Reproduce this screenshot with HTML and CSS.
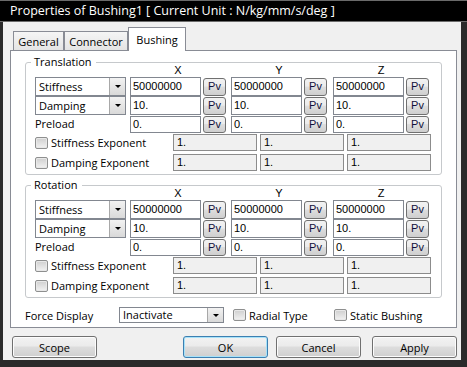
FILE: index.html
```html
<!DOCTYPE html>
<html lang="en">
  <head>
    <meta charset="UTF-8" />
    <title>Properties of Bushing1</title>
    <link rel="stylesheet" href="styles.css">
  </head>
  <body>
    <div class="window">
      <div class="titlebar">Properties of Bushing1 [ Current Unit : N/kg/mm/s/deg ]</div>

      <div class="client">
        <div class="tabs">
          <div class="tab general">General</div>
          <div class="tab connector">Connector</div>
          <div class="tab bushing active">Bushing</div>
        </div>

        <div class="panel">
          <div class="group">
            <span class="legend">Translation</span>
            <div class="row head">
              <div class="lab"></div>
              <div class="cell">X</div>
              <div class="cell">Y</div>
              <div class="cell z">Z</div>
            </div>
            <div class="row r1">
              <div class="lab combo"><span class="txt">Stiffness</span><span class="drop"><i class="arrow"></i></span></div>
              <div class="cell"><div class="field">50000000</div><div class="pv">Pv</div></div>
              <div class="cell"><div class="field">50000000</div><div class="pv">Pv</div></div>
              <div class="cell z"><div class="field">50000000</div><div class="pv">Pv</div></div>
            </div>
            <div class="row r2">
              <div class="lab combo"><span class="txt">Damping</span><span class="drop"><i class="arrow"></i></span></div>
              <div class="cell"><div class="field">10.</div><div class="pv">Pv</div></div>
              <div class="cell"><div class="field">10.</div><div class="pv">Pv</div></div>
              <div class="cell z"><div class="field">10.</div><div class="pv">Pv</div></div>
            </div>
            <div class="row r3">
              <div class="lab text">Preload</div>
              <div class="cell"><div class="field">0.</div><div class="pv">Pv</div></div>
              <div class="cell"><div class="field">0.</div><div class="pv">Pv</div></div>
              <div class="cell z"><div class="field">0.</div><div class="pv">Pv</div></div>
            </div>
            <div class="row exp e1">
              <label class="check-lab"><span class="check"></span>Stiffness Exponent</label>
              <div class="dis">1.</div>
              <div class="dis">1.</div>
              <div class="dis">1.</div>
            </div>
            <div class="row exp e2">
              <label class="check-lab"><span class="check"></span>Damping Exponent</label>
              <div class="dis">1.</div>
              <div class="dis">1.</div>
              <div class="dis">1.</div>
            </div>
          </div>

          <div class="group">
            <span class="legend">Rotation</span>
            <div class="row head">
              <div class="lab"></div>
              <div class="cell">X</div>
              <div class="cell">Y</div>
              <div class="cell z">Z</div>
            </div>
            <div class="row r1">
              <div class="lab combo"><span class="txt">Stiffness</span><span class="drop"><i class="arrow"></i></span></div>
              <div class="cell"><div class="field">50000000</div><div class="pv">Pv</div></div>
              <div class="cell"><div class="field">50000000</div><div class="pv">Pv</div></div>
              <div class="cell z"><div class="field">50000000</div><div class="pv">Pv</div></div>
            </div>
            <div class="row r2">
              <div class="lab combo"><span class="txt">Damping</span><span class="drop"><i class="arrow"></i></span></div>
              <div class="cell"><div class="field">10.</div><div class="pv">Pv</div></div>
              <div class="cell"><div class="field">10.</div><div class="pv">Pv</div></div>
              <div class="cell z"><div class="field">10.</div><div class="pv">Pv</div></div>
            </div>
            <div class="row r3">
              <div class="lab text">Preload</div>
              <div class="cell"><div class="field">0.</div><div class="pv">Pv</div></div>
              <div class="cell"><div class="field">0.</div><div class="pv">Pv</div></div>
              <div class="cell z"><div class="field">0.</div><div class="pv">Pv</div></div>
            </div>
            <div class="row exp e1">
              <label class="check-lab"><span class="check"></span>Stiffness Exponent</label>
              <div class="dis">1.</div>
              <div class="dis">1.</div>
              <div class="dis">1.</div>
            </div>
            <div class="row exp e2">
              <label class="check-lab"><span class="check"></span>Damping Exponent</label>
              <div class="dis">1.</div>
              <div class="dis">1.</div>
              <div class="dis">1.</div>
            </div>
          </div>

          <div class="force">
            <div class="force-lab">Force Display</div>
            <div class="combo force-combo"><span class="txt">Inactivate</span><span class="drop"><i class="arrow"></i></span></div>
            <label class="check-lab radial"><span class="check"></span>Radial Type</label>
            <label class="check-lab"><span class="check"></span>Static Bushing</label>
          </div>
        </div>

        <div class="buttons">
          <button class="btn">Scope</button>
          <button class="btn ok">OK</button>
          <button class="btn cancel">Cancel</button>
          <button class="btn apply">Apply</button>
        </div>
      </div>
    </div>
  </body>
</html>
```

FILE: styles.css
```css
* {
  box-sizing: border-box;
}

body {
  margin: 0;
  background: #1a1a1a;
  font-family: "Open Sans", "Noto Sans", sans-serif;
  font-size: 11px;
  color: #000;
}

.window {
  width: 467px;
  height: 367px;
  overflow: hidden;
}

.titlebar {
  height: 22px;
  padding-left: 10px;
  background: linear-gradient(#6a6a6a 0, #6a6a6a 1px, #000 1px, #000 21px, #6c6c6c 21px);
  color: #fff;
  font-size: 12.5px;
  line-height: 22px;
  white-space: nowrap;
}

.client {
  height: 345px;
  padding-top: 5px;
  background: #f0f0f0;
  border-left: 3px solid #2a2a2a;
  border-right: 6px solid #2a2a2a;
  border-bottom: 7px solid #2a2a2a;
}

/* tabs */
.tabs {
  position: relative;
  z-index: 1;
  display: flex;
  align-items: flex-end;
  height: 23px;
  padding-left: 10px;
}

.tab {
  height: 19px;
  padding-top: 1px;
  border: 1px solid #898c95;
  border-bottom: none;
  background: linear-gradient(#f5f5f5, #e4e4e4);
  text-align: center;
  line-height: 18px;
}

.tab.general {
  width: 51px;
}

.tab.connector {
  width: 64px;
}

.tab.bushing {
  width: 58px;
}

.tab.active {
  height: 24px;
  margin-bottom: -1px;
  padding-top: 3px;
  background: #fff;
}

.panel {
  height: 278px;
  margin: 0 4px 0 7px;
  padding: 11px 14px 0;
  background: #fff;
  border: 1px solid #898c95;
}

/* group boxes */
.group {
  position: relative;
  height: 113px;
  padding-left: 9px;
  border: 1px solid #c6c9cc;
  border-radius: 3px;
}

.group + .group {
  margin-top: 10px;
}

.legend {
  position: absolute;
  top: -8px;
  left: 5px;
  padding: 0 4px 0 3px;
  background: #fff;
  line-height: 14px;
}

.row {
  display: flex;
}

.head {
  height: 14px;
  line-height: 14px;
  font-family: "Liberation Sans", sans-serif;
}

.head .cell {
  justify-content: center;
}

.r1,
.r2 {
  height: 19px;
}

.r3 {
  height: 17px;
  margin-top: 1px;
}

.exp {
  height: 17px;
}

.e1 {
  margin-top: 1px;
}

.e2 {
  margin-top: 3px;
}

.lab {
  width: 91px;
}

.lab.text {
  line-height: 16px;
}

.cell {
  display: flex;
  width: 96px;
  gap: 2px;
}

.lab + .cell {
  margin-left: 4px;
}

.cell + .cell {
  margin-left: 5px;
}

.cell.z {
  margin-left: 6px;
}

.field {
  width: 71px;
  padding-left: 2px;
  border: 1px solid #828790;
  background: #fff;
  font-family: "Liberation Sans", sans-serif;
  line-height: 16px;
}

.r3 .field {
  line-height: 15px;
}

.pv {
  width: 23px;
  margin-top: 1px;
  border: 1px solid #707070;
  border-radius: 3px;
  background: linear-gradient(#f2f2f2 0%, #ebebeb 45%, #dddddd 50%, #cfcfcf 100%);
  color: #10103a;
  font-family: "Liberation Sans", sans-serif;
  text-align: center;
  line-height: 15px;
}

.r3 .pv {
  margin-top: 0;
  line-height: 14px;
}

/* combo boxes */
.combo {
  display: flex;
  border: 1px solid #828790;
  background: #fff;
}

.combo .txt {
  flex: 1;
  padding-left: 3px;
  line-height: 17px;
}

.combo .drop {
  display: flex;
  align-items: center;
  justify-content: center;
  width: 16px;
  border-left: 1px solid #a8a8a8;
  background: linear-gradient(#f2f2f2, #d9d9d9);
}

.arrow {
  width: 0;
  height: 0;
  border-left: 3px solid transparent;
  border-right: 3px solid transparent;
  border-top: 3px solid #000;
}

/* check boxes */
.check-lab {
  display: flex;
  align-items: center;
  gap: 3px;
  width: 138px;
}

.check {
  width: 13px;
  height: 12px;
  border: 1px solid #8e8f8f;
  border-radius: 2px;
  background: linear-gradient(#cfcfcf, #f2f2f2);
  box-shadow: inset 0 0 0 1px #e8e8e8;
}

.dis {
  width: 84px;
  padding-left: 3px;
  border: 1px solid #8c8c8c;
  background: #f0f0f0;
  font-family: "Liberation Sans", sans-serif;
  line-height: 15px;
}

.dis + .dis {
  margin-left: 3px;
}

/* force display row */
.force {
  display: flex;
  align-items: center;
  height: 16px;
  margin-top: 9px;
}

.force-lab {
  width: 94px;
}

.force-combo {
  width: 105px;
  height: 16px;
}

.force-combo .txt {
  line-height: 14px;
}

.force .check-lab {
  width: auto;
}

.force .radial {
  width: 101px;
  margin-left: 9px;
}

/* dialog buttons */
.buttons {
  display: flex;
  height: 22px;
  margin-top: 8px;
  padding-left: 9px;
}

.btn {
  width: 85px;
  padding: 0;
  border: 1px solid #707070;
  border-radius: 3px;
  background: linear-gradient(#f2f2f2 0%, #ebebeb 45%, #dddddd 50%, #cfcfcf 100%);
  box-shadow: inset 0 0 0 1px #fcfcfc;
  font-family: "Open Sans", sans-serif;
  font-size: 11px;
  color: #000;
}

.btn.ok {
  margin-left: 86px;
  border-color: #3c7fb1;
  box-shadow: inset 0 0 0 1px #a7e2f9;
}

.btn.cancel {
  margin-left: 8px;
}

.btn.apply {
  margin-left: 11px;
}
```
